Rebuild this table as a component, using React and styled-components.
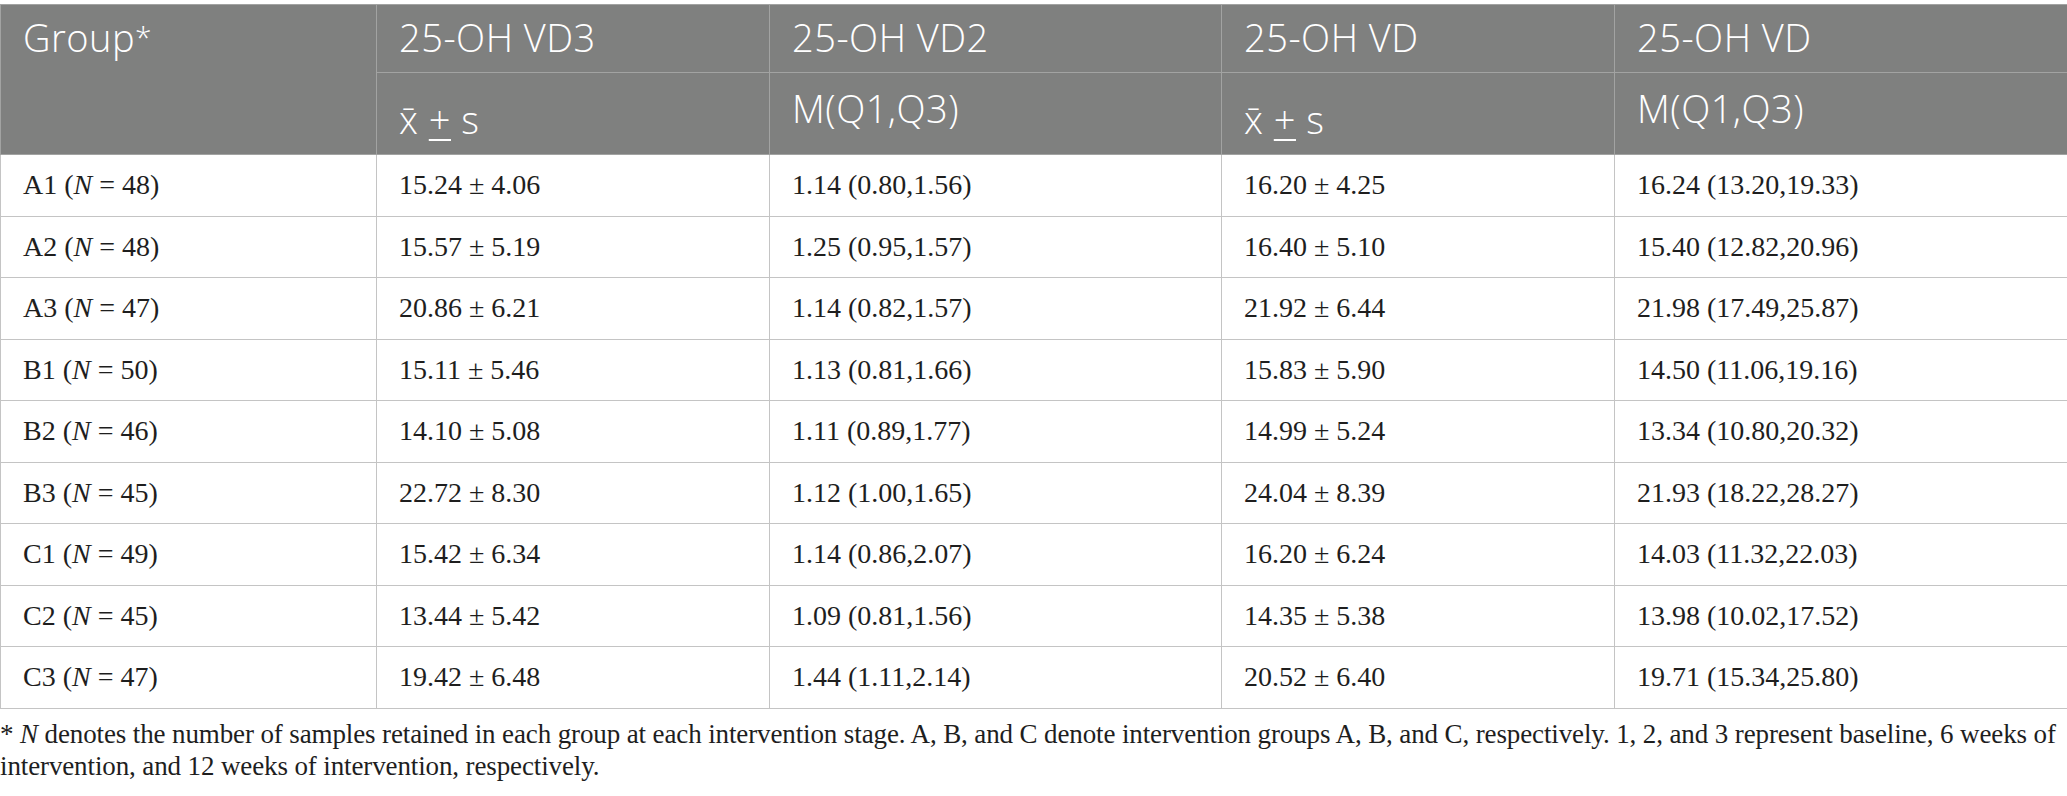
import React from 'react'
import styled, { createGlobalStyle } from 'styled-components'

const GlobalStyle = createGlobalStyle`
  body {
    margin: 0;
    background: #ffffff;
  }
`

const Page = styled.div`
  width: 2067px;
  padding-top: 4px;
`

const Table = styled.table`
  width: 100%;
  border-collapse: collapse;
  table-layout: fixed;
  border: 1px solid #c4c4c4;
`

const HeadRow = styled.tr`
  height: ${(p) => p.$height}px;
`

const HeadCell = styled.th`
  background: #7f807f;
  color: #ffffff;
  font-family: 'Open Sans', 'Liberation Sans', sans-serif;
  font-weight: 300;
  font-size: 38px;
  letter-spacing: 0.5px;
  line-height: 1.2;
  text-align: left;
  vertical-align: ${(p) => (p.$math ? 'bottom' : 'top')};
  padding: ${(p) => (p.$math ? '0 22px 11px' : `${p.$top}px 22px 0`)};
  border: 1px solid #a2a3a2;

  u {
    text-decoration-thickness: 2px;
    text-underline-offset: 5px;
  }
`

const Star = styled.span`
  font-size: 30px;
  vertical-align: 4px;
`

const BodyRow = styled.tr`
  height: 61.5px;
`

const Cell = styled.td`
  font-family: 'Liberation Serif', 'Times New Roman', serif;
  font-size: 28px;
  color: #1e1e1e;
  padding: 0 22px;
  border: 1px solid #c4c4c4;
  white-space: nowrap;
`

const Footnote = styled.p`
  margin: 9px 0 0;
  font-family: 'Liberation Serif', 'Times New Roman', serif;
  font-size: 27px;
  line-height: 32px;
  letter-spacing: -0.12px;
  color: #1e1e1e;
`

const rows = [
  ['A1', '48', '15.24 ± 4.06', '1.14 (0.80,1.56)', '16.20 ± 4.25', '16.24 (13.20,19.33)'],
  ['A2', '48', '15.57 ± 5.19', '1.25 (0.95,1.57)', '16.40 ± 5.10', '15.40 (12.82,20.96)'],
  ['A3', '47', '20.86 ± 6.21', '1.14 (0.82,1.57)', '21.92 ± 6.44', '21.98 (17.49,25.87)'],
  ['B1', '50', '15.11 ± 5.46', '1.13 (0.81,1.66)', '15.83 ± 5.90', '14.50 (11.06,19.16)'],
  ['B2', '46', '14.10 ± 5.08', '1.11 (0.89,1.77)', '14.99 ± 5.24', '13.34 (10.80,20.32)'],
  ['B3', '45', '22.72 ± 8.30', '1.12 (1.00,1.65)', '24.04 ± 8.39', '21.93 (18.22,28.27)'],
  ['C1', '49', '15.42 ± 6.34', '1.14 (0.86,2.07)', '16.20 ± 6.24', '14.03 (11.32,22.03)'],
  ['C2', '45', '13.44 ± 5.42', '1.09 (0.81,1.56)', '14.35 ± 5.38', '13.98 (10.02,17.52)'],
  ['C3', '47', '19.42 ± 6.48', '1.44 (1.11,2.14)', '20.52 ± 6.40', '19.71 (15.34,25.80)'],
]

const MeanSd = () => (
  <>
    x̄ <u>+</u> s
  </>
)

export default function App() {
  return (
    <Page>
      <GlobalStyle />
      <Table>
        <colgroup>
          <col style={{ width: 376 }} />
          <col style={{ width: 393 }} />
          <col style={{ width: 452 }} />
          <col style={{ width: 393 }} />
          <col style={{ width: 453 }} />
        </colgroup>
        <thead>
          <HeadRow $height={68}>
            <HeadCell rowSpan={2} $top={10}>
              Group<Star>*</Star>
            </HeadCell>
            <HeadCell $top={10}>25-OH VD3</HeadCell>
            <HeadCell $top={10}>25-OH VD2</HeadCell>
            <HeadCell $top={10}>25-OH VD</HeadCell>
            <HeadCell $top={10}>25-OH VD</HeadCell>
          </HeadRow>
          <HeadRow $height={82}>
            <HeadCell $math><MeanSd /></HeadCell>
            <HeadCell $top={13}>M(Q1,Q3)</HeadCell>
            <HeadCell $math><MeanSd /></HeadCell>
            <HeadCell $top={13}>M(Q1,Q3)</HeadCell>
          </HeadRow>
        </thead>
        <tbody>
          {rows.map(([group, n, a, b, c, d]) => (
            <BodyRow key={group}>
              <Cell>
                {group} (<i>N</i> = {n})
              </Cell>
              <Cell>{a}</Cell>
              <Cell>{b}</Cell>
              <Cell>{c}</Cell>
              <Cell>{d}</Cell>
            </BodyRow>
          ))}
        </tbody>
      </Table>
      <Footnote>
        * <i>N</i> denotes the number of samples retained in each group at each intervention stage. A, B, and C
        denote intervention groups A, B, and C, respectively. 1, 2, and 3 represent baseline, 6 weeks of
        <br />
        intervention, and 12 weeks of intervention, respectively.
      </Footnote>
    </Page>
  )
}
